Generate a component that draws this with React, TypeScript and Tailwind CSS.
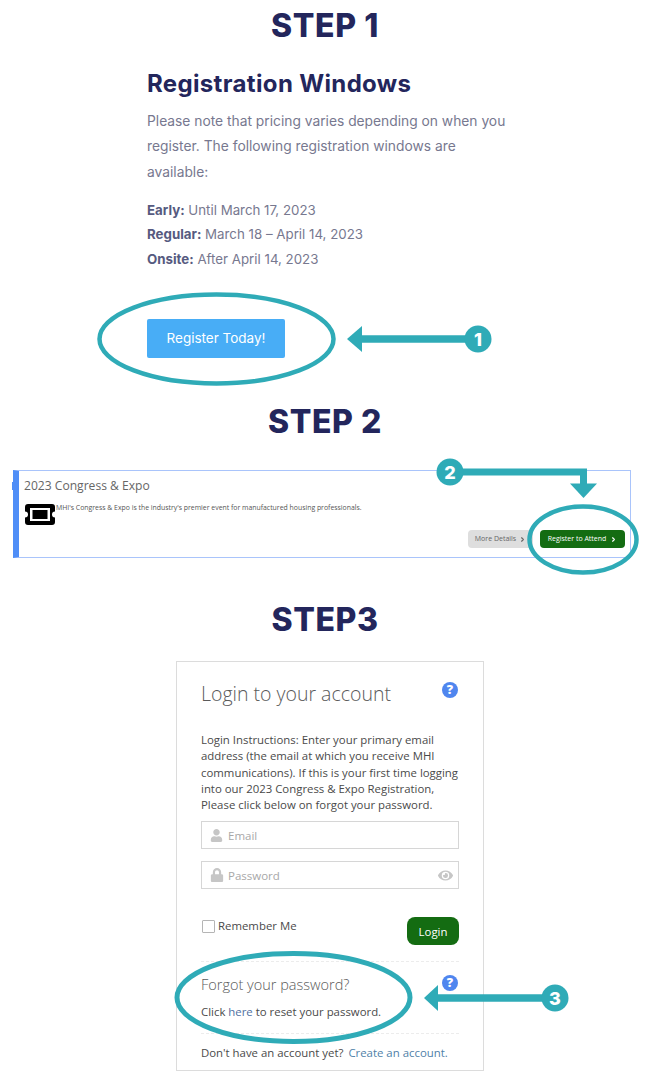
import { ChevronRight } from "lucide-react";
import { FaUser, FaLock, FaEye } from "react-icons/fa";

const OS = "font-['Open_Sans',sans-serif]";

function StepTitle({ children, className }: { children: string; className: string }) {
  return (
    <h2 className={`text-center font-['Inter',sans-serif] text-[32px] leading-[40px] font-extrabold tracking-[0.6px] text-[#23265c] ${className}`}>
      {children}
    </h2>
  );
}

function Help({ className = "" }: { className?: string }) {
  return (
    <svg viewBox="0 0 16 16" className={`h-4 w-4 ${className}`}>
      <circle cx="8" cy="8" r="8" fill="#4f86ef" />
      <text x="8" y="12.4" textAnchor="middle" fontSize="12.5" fontWeight="800" fill="#fff" fontFamily="'Open Sans',sans-serif">?</text>
    </svg>
  );
}

function Overlay() {
  const c = "#2fabb7";
  const Num = ({ x, y, n }: { x: number; y: number; n: string }) => (
    <g>
      <circle cx={x} cy={y} r="13.5" fill={c} />
      <text x={x} y={y + 6.5} textAnchor="middle" fontSize="18" fontWeight="800" fill="#fff" fontFamily="Inter,sans-serif">{n}</text>
    </g>
  );
  return (
    <svg className="pointer-events-none absolute left-0 top-0 h-[1083px] w-[650px]" viewBox="0 0 650 1083" fill="none">
      <ellipse cx="216.5" cy="339" rx="117" ry="44.5" stroke={c} strokeWidth="4.5" />
      <path d="M478 339H358" stroke={c} strokeWidth="7.5" />
      <path d="M347 339L362 326V352Z" fill={c} />
      <Num x={478} y={339} n="1" />

      <ellipse cx="583" cy="539.5" rx="53.5" ry="33" stroke={c} strokeWidth="4.5" />
      <path d="M450 472H583.500V486" stroke={c} strokeWidth="7" />
      <path d="M570 483.500H597L583.500 498Z" fill={c} />
      <Num x={450} y={472} n="2" />

      <ellipse cx="293.500" cy="997.500" rx="116.500" ry="44" stroke={c} strokeWidth="5" />
      <path d="M555 998H434" stroke={c} strokeWidth="7.500" />
      <path d="M424 998L438 985V1011Z" fill={c} />
      <Num x={555} y={998} n="3" />
    </svg>
  );
}

function Field({ icon, label, eye }: { icon: React.ReactNode; label: string; eye?: boolean }) {
  return (
    <div className="flex h-[28px] items-center border border-[#d6d6d6] pl-2 pr-[5px]">
      <span className="flex w-[18px] shrink-0 text-[#c6c6c6]">{icon}</span>
      <span className="text-[11.500px] text-[#a8a8a8]">{label}</span>
      {eye && <FaEye className="ml-auto h-[15px] w-[15px] text-[#c6c6c6]" />}
    </div>
  );
}

export default function App() {
  return (
    <div className="relative h-[1083px] w-[650px] overflow-hidden bg-white">
      <StepTitle className="pt-[6px]">STEP 1</StepTitle>

      <section className="ml-[147px] mt-[24px] w-[370px] whitespace-nowrap font-['Inter',sans-serif]">
        <h3 className="text-[24px] leading-[28px] font-bold tracking-[0.35px] text-[#23265c]">Registration Windows</h3>
        <p className="mt-[10.500px] text-[13.800px] leading-[25.500px] text-[#77788f]">
          Please note that pricing varies depending on when you
          <br />
          register. The following registration windows are
          <br />
          available:
        </p>
        <div className="mt-[12.500px] text-[13.300px] leading-[24.500px] text-[#77788f]">
          <div><b className="font-bold text-[#565a80]">Early:</b> Until March 17, 2023</div>
          <div><b className="font-bold text-[#565a80]">Regular:</b> March 18 – April 14, 2023</div>
          <div><b className="font-bold text-[#565a80]">Onsite:</b> After April 14, 2023</div>
        </div>
        <button className="mt-[48px] flex h-[39px] w-[138px] items-center justify-center rounded-[2px] bg-[#48adf6] text-[13.500px] text-white">
          Register Today!
        </button>
      </section>

      <StepTitle className="mt-[44px]">STEP 2</StepTitle>

      <section className={`relative mx-[13px] mt-[28px] h-[88px] w-[618px] border border-l-[6px] border-[#a9c4fb] border-l-[#4f8ef7] pl-[5px] pr-[5px] ${OS}`}>
        <span className="absolute left-[-7px] top-[11px] h-[8px] w-[1px] bg-[#4f8ef7]" />
        <div className="pt-[6px] text-[12.100px] leading-[18px] text-[#666]">2023 Congress &amp; Expo</div>
        <div className="mt-[3px] flex h-[28px] items-start">
          <svg viewBox="0 0 30 21" className="ml-[1px] mt-[6px] h-[21px] w-[30px] shrink-0">
            <path fillRule="evenodd" fill="#000" d="M3 0H27a3 3 0 0 1 3 3V7.500a3 3 0 0 0 0 6V18a3 3 0 0 1-3 3H3a3 3 0 0 1-3-3V13.500a3 3 0 0 0 0-6V3a3 3 0 0 1 3-3ZM5 4V17H25V4Z" />
            <rect x="7.500" y="6" width="15" height="9" fill="#000" />
          </svg>
          <span className="ml-[1px] mt-[5px] whitespace-nowrap text-[6.900px] leading-[9px] text-[#555]">
            MHI's Congress &amp; Expo is the industry's premier event for manufactured housing professionals.
          </span>
        </div>
        <div className="mt-[4px] flex justify-end gap-[7px]">
          <span className="flex h-[18px] w-[65px] items-center justify-center gap-[3px] rounded-[4px] bg-[#dedede] text-[7px] font-medium text-[#666]">
            More Details <ChevronRight className="h-[7px] w-[7px]" strokeWidth={4} />
          </span>
          <span className="flex h-[18px] w-[85px] items-center justify-center gap-[4px] rounded-[4px] bg-[#146c12] text-[7px] font-medium text-white">
            Register to Attend <ChevronRight className="h-[7px] w-[7px]" strokeWidth={4} />
          </span>
        </div>
      </section>

      <StepTitle className="mt-[42px]">STEP3</StepTitle>

      <section className={`ml-[176px] mt-[21px] h-[410px] w-[308px] whitespace-nowrap border border-[#dcdcdc] px-[24px] text-[#4a4a4a] ${OS}`}>
        <div className="flex items-start justify-between pt-[18px]">
          <h3 className="text-[19.500px] leading-[28px] font-light text-[#5a5a5a]">Login to your account</h3>
          <Help className="mt-[2px] mr-[1px]" />
        </div>
        <p className="mt-[24px] text-[11.400px] leading-[16.300px]">
          Login Instructions: Enter your primary email
          <br />
          address (the email at which you receive MHI
          <br />
          communications). If this is your first time logging
          <br />
          into our 2023 Congress &amp; Expo Registration,
          <br />
          Please click below on forgot your password.
        </p>
        <div className="mt-[8px] flex flex-col gap-[12px]">
          <Field label="Email" icon={<FaUser className="h-[13px] w-[13px]" />} />
          <Field label="Password" icon={<FaLock className="h-[14px] w-[14px]" />} eye />
        </div>
        <div className="mt-[28px] flex items-start justify-between">
          <label className="mt-[2px] flex items-center gap-[3px] pl-[1px] text-[11.400px] leading-[14px]">
            <span className="h-[13px] w-[13px] rounded-[1px] border border-[#b5b5b5]" />
            Remember Me
          </label>
          <button className="flex h-[28px] w-[52px] items-center justify-center rounded-[8px] bg-[#146c12] text-[11.400px] text-white">
            Login
          </button>
        </div>
        <div className="mt-[16px] border-t border-dashed border-[#ececec]" />
        <div className="flex items-start justify-between pt-[12px]">
          <h4 className="text-[14.500px] leading-[22px] font-light text-[#5a5a5a]">Forgot your password?</h4>
          <Help className="mt-[1px] mr-[1px]" />
        </div>
        <p className="mt-[8px] text-[11.400px] leading-[16px]">
          Click <span className="text-[#4f6f9f]">here</span> to reset your password.
        </p>
        <div className="mt-[13px] border-t border-dashed border-[#ececec]" />
        <p className="mt-[11px] text-[11.400px] leading-[16px]">
          Don't have an account yet? <span className="ml-[2px] text-[#4f7fa8]">Create an account.</span>
        </p>
      </section>

      <Overlay />
    </div>
  );
}
